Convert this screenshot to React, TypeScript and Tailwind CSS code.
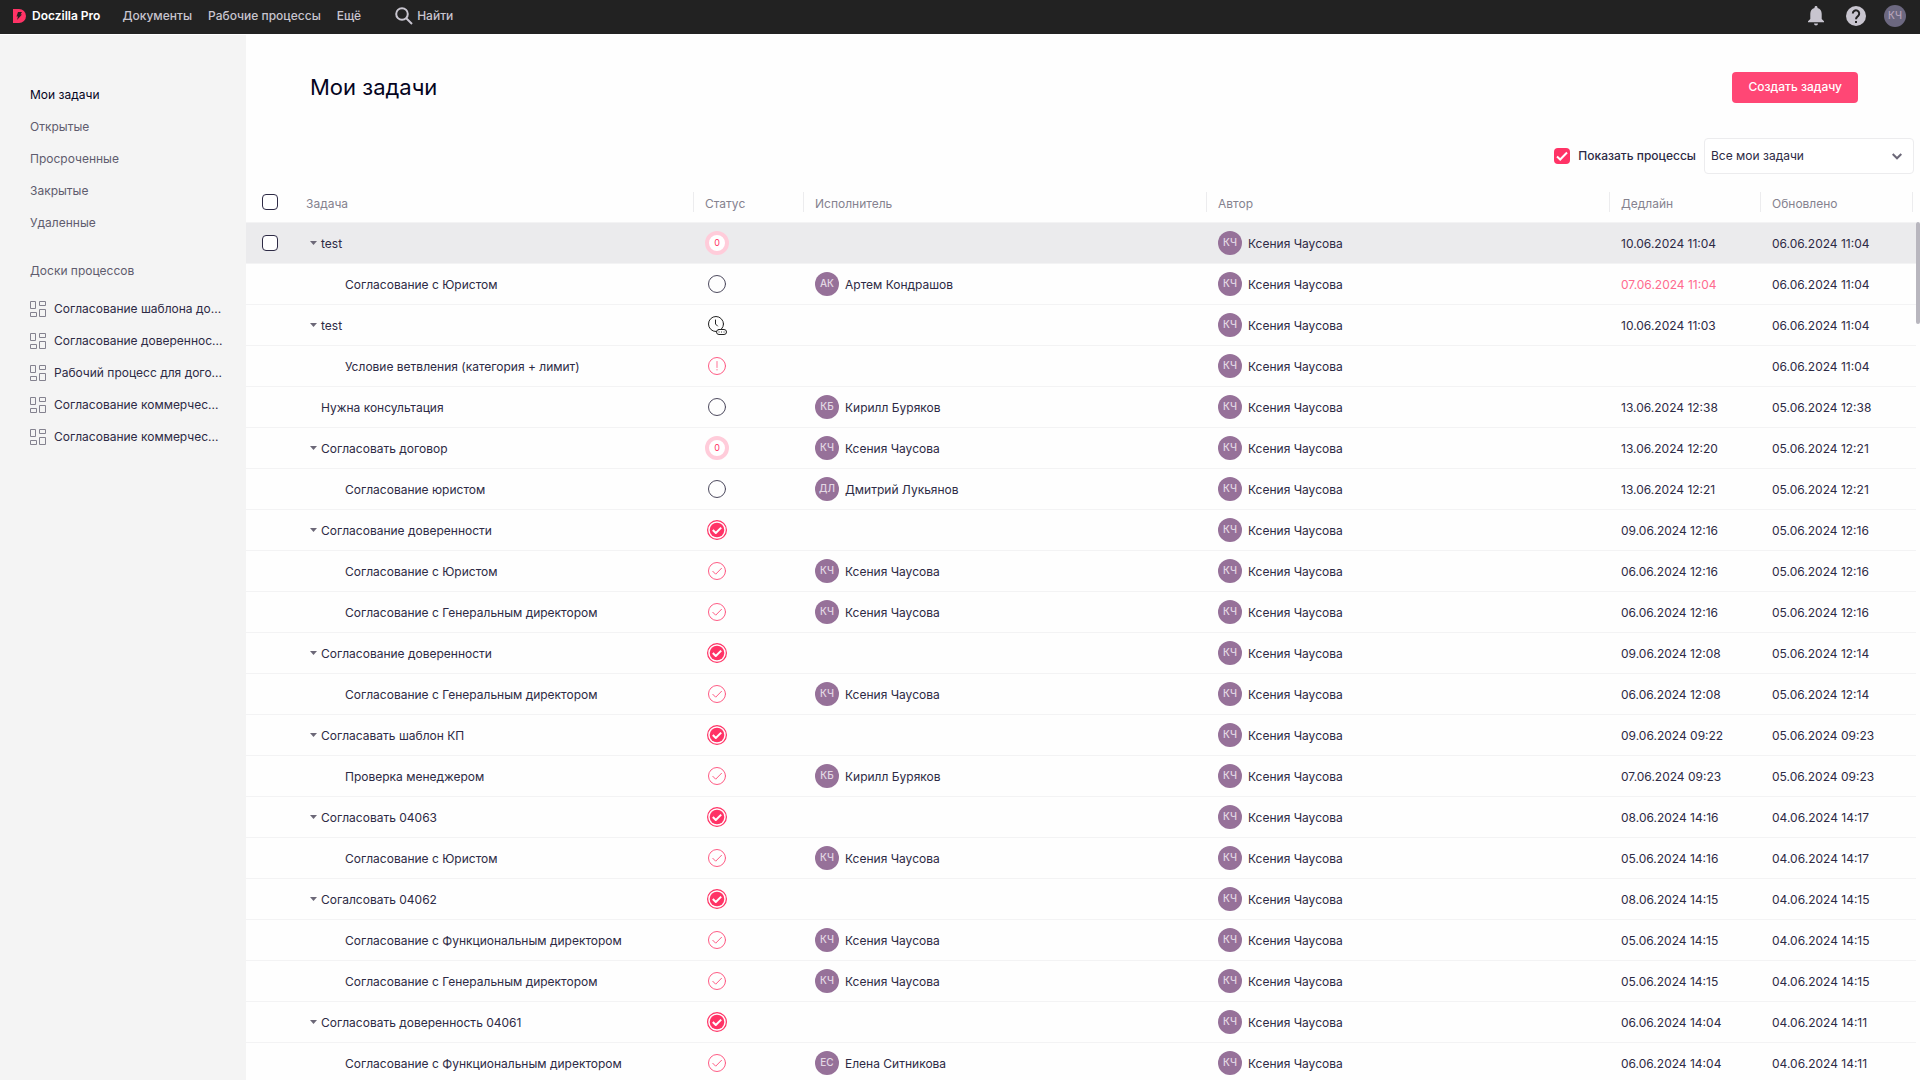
import type { ReactNode } from 'react'

type Status = 'zero' | 'open' | 'waiting' | 'alert' | 'done' | 'closed'

type Task = {
  title: string
  level: 'group' | 'single' | 'child'
  status: Status
  assignee?: string
  deadline?: string
  overdue?: boolean
  updated: string
}

const AUTHOR = 'Ксения Чаусова'

const navItems = ['Документы', 'Рабочие процессы', 'Ещё']

const filters = ['Мои задачи', 'Открытые', 'Просроченные', 'Закрытые', 'Удаленные']

const boards = [
  'Согласование шаблона до...',
  'Согласование довереннос...',
  'Рабочий процесс для дого...',
  'Согласование коммерчес...',
  'Согласование коммерчес...',
]

const tasks: Task[] = [
  { title: 'test', level: 'group', status: 'zero', deadline: '10.06.2024 11:04', updated: '06.06.2024 11:04' },
  { title: 'Согласование с Юристом', level: 'child', status: 'open', assignee: 'Артем Кондрашов', deadline: '07.06.2024 11:04', overdue: true, updated: '06.06.2024 11:04' },
  { title: 'test', level: 'group', status: 'waiting', deadline: '10.06.2024 11:03', updated: '06.06.2024 11:04' },
  { title: 'Условие ветвления (категория + лимит)', level: 'child', status: 'alert', updated: '06.06.2024 11:04' },
  { title: 'Нужна консультация', level: 'single', status: 'open', assignee: 'Кирилл Буряков', deadline: '13.06.2024 12:38', updated: '05.06.2024 12:38' },
  { title: 'Согласовать договор', level: 'group', status: 'zero', assignee: AUTHOR, deadline: '13.06.2024 12:20', updated: '05.06.2024 12:21' },
  { title: 'Согласование юристом', level: 'child', status: 'open', assignee: 'Дмитрий Лукьянов', deadline: '13.06.2024 12:21', updated: '05.06.2024 12:21' },
  { title: 'Согласование доверенности', level: 'group', status: 'closed', deadline: '09.06.2024 12:16', updated: '05.06.2024 12:16' },
  { title: 'Согласование с Юристом', level: 'child', status: 'done', assignee: AUTHOR, deadline: '06.06.2024 12:16', updated: '05.06.2024 12:16' },
  { title: 'Согласование с Генеральным директором', level: 'child', status: 'done', assignee: AUTHOR, deadline: '06.06.2024 12:16', updated: '05.06.2024 12:16' },
  { title: 'Согласование доверенности', level: 'group', status: 'closed', deadline: '09.06.2024 12:08', updated: '05.06.2024 12:14' },
  { title: 'Согласование с Генеральным директором', level: 'child', status: 'done', assignee: AUTHOR, deadline: '06.06.2024 12:08', updated: '05.06.2024 12:14' },
  { title: 'Согласавать шаблон КП', level: 'group', status: 'closed', deadline: '09.06.2024 09:22', updated: '05.06.2024 09:23' },
  { title: 'Проверка менеджером', level: 'child', status: 'done', assignee: 'Кирилл Буряков', deadline: '07.06.2024 09:23', updated: '05.06.2024 09:23' },
  { title: 'Согласовать 04063', level: 'group', status: 'closed', deadline: '08.06.2024 14:16', updated: '04.06.2024 14:17' },
  { title: 'Согласование с Юристом', level: 'child', status: 'done', assignee: AUTHOR, deadline: '05.06.2024 14:16', updated: '04.06.2024 14:17' },
  { title: 'Согалсовать 04062', level: 'group', status: 'closed', deadline: '08.06.2024 14:15', updated: '04.06.2024 14:15' },
  { title: 'Согласование с Функциональным директором', level: 'child', status: 'done', assignee: AUTHOR, deadline: '05.06.2024 14:15', updated: '04.06.2024 14:15' },
  { title: 'Согласование с Генеральным директором', level: 'child', status: 'done', assignee: AUTHOR, deadline: '05.06.2024 14:15', updated: '04.06.2024 14:15' },
  { title: 'Согласовать доверенность 04061', level: 'group', status: 'closed', deadline: '06.06.2024 14:04', updated: '04.06.2024 14:11' },
  { title: 'Согласование с Функциональным директором', level: 'child', status: 'done', assignee: 'Елена Ситникова', deadline: '06.06.2024 14:04', updated: '04.06.2024 14:11' },
]

const getInitials = (name: string) =>
  name
    .split(' ')
    .map((part) => part[0])
    .join('')

function StatusIcon({ status }: { status: Status }) {
  if (status === 'zero') {
    return (
      <span className="flex size-6 items-center justify-center rounded-full border-4 border-[#ffccda] bg-white text-[9px] leading-none text-[#ff3366]">
        0
      </span>
    )
  }

  return (
    <svg className="size-6" viewBox="0 0 24 24" fill="none" strokeLinecap="round" strokeLinejoin="round">
      {status === 'open' && <circle cx="12" cy="12" r="8.5" stroke="#4d4a5e" />}
      {status === 'alert' && (
        <>
          <circle cx="12" cy="12" r="8.5" stroke="#ff5c85" />
          <path d="M12 7.5v6M12 15.5v.5" stroke="#ff7597" />
        </>
      )}
      {status === 'done' && (
        <>
          <circle cx="12" cy="12" r="8.5" stroke="#ff5c85" />
          <path d="m7.8 12.3 2.9 2.9 5.8-5.900" stroke="#ff5c85" />
        </>
      )}
      {status === 'closed' && (
        <>
          <circle cx="12" cy="12" r="9.4" stroke="#ff3366" strokeWidth="1.2" />
          <circle cx="12" cy="12" r="7.3" fill="#ff3366" />
          <path d="m7.8 12 3 3 5.400-5.400" stroke="#fff" strokeWidth="2" strokeLinecap="butt" />
        </>
      )}
      {status === 'waiting' && (
        <>
          <circle cx="11" cy="11" r="7.5" stroke="#222" />
          <path d="M10.5 7v4l2 2" stroke="#222" />
          <rect x="11.5" y="16.5" width="10" height="5" rx="2.5" fill="#fff" stroke="#222" />
          <path d="M14 19h.1M16.5 19h.1M19 19h.1" stroke="#222" />
        </>
      )}
    </svg>
  )
}

function BoardIcon() {
  return (
    <svg className="size-4 shrink-0" viewBox="0 0 16 16" fill="none" stroke="#84828f">
      <path d="M.5.5h5v7h-5zM9.500.5h6v4h-6zM.5 11.500h6v4h-6zM9.500 8.500h6v7h-6z" />
    </svg>
  )
}

function Logo() {
  return (
    <svg className="h-3.5 w-[13px]" viewBox="0 0 13 14">
      <path d="M0 0h6a7 7 0 0 1 0 14H0z" fill="#ff3366" />
      <path d="M5 3h4L7.500 5.500H9L4 11l1-3.500H3.500z" fill="#222" />
    </svg>
  )
}

function Person({ name }: { name: string }) {
  return (
    <div className="flex items-center gap-1.5">
      <span className="flex size-6 items-center justify-center rounded-full bg-[#967199] pb-0.5 text-[10px] font-medium text-[#e3d8e4]">
        {getInitials(name)}
      </span>
      <span className="pt-0.5">{name}</span>
    </div>
  )
}

function Checkbox({ label }: { label: string }) {
  return (
    <input
      type="checkbox"
      aria-label={label}
      className="block size-4 appearance-none rounded border border-[#2d2a45] bg-white"
    />
  )
}

function HeadCell({ children }: { children?: ReactNode }) {
  return (
    <th className="p-0 text-left font-normal">
      <div className="flex h-5 items-center border-l border-[#ececee] pt-1 pl-[11px]">{children}</div>
    </th>
  )
}

function Header() {
  return (
    <header className="flex h-[35px] shrink-0 items-center border-b border-white bg-[#222] bg-clip-padding pr-3.5 pb-0.5 pl-[13px] font-medium text-[#c8c5cf]">
      <a href="#" className="flex items-center gap-1.5 font-semibold text-white">
        <Logo />
        Doczilla Pro
      </a>
      <nav className="ml-[22px] flex gap-4">
        {navItems.map((item) => (
          <a key={item} href="#">
            {item}
          </a>
        ))}
      </nav>
      <button type="button" className="ml-[34px] flex items-center gap-1">
        <svg className="size-[18px]" viewBox="0 0 18 18" fill="none" stroke="currentColor" strokeWidth="2">
          <circle cx="7" cy="7" r="5.800" />
          <path d="m11 11 6 6" />
        </svg>
        Найти
      </button>
      <div className="ml-auto flex items-center">
        <button type="button" aria-label="Уведомления">
          <svg className="h-5 w-4" viewBox="0 0 16 20" fill="currentColor">
            <path d="M8 0c-1 0-1.500.7-1.500 1.500v.6C3.800 2.700 2.300 5 2.300 7.800V13L0 15.300v1h16v-1L13.700 13V7.800c0-2.800-1.500-5.100-4.200-5.700v-.6C9.500.7 9 0 8 0zM6 17.500a2 2 0 0 0 4 0z" />
          </svg>
        </button>
        <button type="button" aria-label="Помощь" className="ml-[22px]">
          <svg className="size-5" viewBox="0 0 20 20">
            <circle cx="10" cy="10" r="10" fill="#c8c5cf" />
            <path d="M6.800 7.500a3.200 3.200 0 1 1 5.300 2.400C10.800 11 10 11.500 10 13.200" fill="none" stroke="#222" strokeWidth="2" />
            <path d="M9 15h2v2H9z" fill="#222" />
          </svg>
        </button>
        <button type="button" className="ml-[18px] size-[22px] rounded-full bg-[#6c6880] pb-0.5 text-[10px] text-[#b5a3b8]">
          КЧ
        </button>
      </div>
    </header>
  )
}

function Sidebar() {
  return (
    <aside className="w-[246px] shrink-0 bg-[#f4f4f4] pt-11 pr-6 pl-[30px] text-[#5f5c6e]">
      <nav>
        {filters.map((item, index) => (
          <a key={item} href="#" className={index === 0 ? 'flex h-8 items-center text-[#05051e]' : 'flex h-8 items-center'}>
            {item}
          </a>
        ))}
      </nav>
      <h2 className="mt-4 flex h-8 items-center">Доски процессов</h2>
      <nav className="mt-1.5 text-[#2d2a45]">
        {boards.map((item, index) => (
          <a key={index} href="#" className="flex h-8 items-center gap-2">
            <BoardIcon />
            <span className="whitespace-nowrap">{item}</span>
          </a>
        ))}
      </nav>
    </aside>
  )
}

function TaskRow({ task, active }: { task: Task; active: boolean }) {
  return (
    <tr className={active ? 'h-[41px] border-b border-[#f3f3f4] bg-[#ebebed]' : 'h-[41px] border-b border-[#f3f3f4]'}>
      <td className="p-0 pl-4">{active && <Checkbox label="Выбрать задачу" />}</td>
      <td className="p-0 pt-0.5">
        <div className={task.level === 'child' ? 'flex items-center pl-[51px]' : 'flex items-center pl-4'}>
          {task.level !== 'child' && (
            <span className="w-[11px] pb-0.5">
              {task.level === 'group' && (
                <svg className="h-1 w-[7px]" viewBox="0 0 7 4" fill="#6c6878">
                  <path d="M0 0h7L3.500 4z" />
                </svg>
              )}
            </span>
          )}
          {task.title}
        </div>
      </td>
      <td className="p-0 pl-3">
        <StatusIcon status={task.status} />
      </td>
      <td className="p-0 pl-3">{task.assignee && <Person name={task.assignee} />}</td>
      <td className="p-0 pl-3">
        <Person name={AUTHOR} />
      </td>
      <td className={task.overdue ? 'p-0 pt-0.5 pl-3 text-[#ff6b8f]' : 'p-0 pt-0.5 pl-3'}>{task.deadline}</td>
      <td className="p-0 pt-0.5 pl-3">{task.updated}</td>
      <td className="p-0" />
    </tr>
  )
}

function TaskTable() {
  return (
    <div className="flex">
      <div className="min-w-0 flex-1">
        <table className="w-full table-fixed border-collapse">
          <colgroup>
            <col className="w-12" />
            <col className="w-[399px]" />
            <col className="w-[110px]" />
            <col />
            <col />
            <col className="w-[151px]" />
            <col className="w-[152px]" />
            <col className="w-1" />
          </colgroup>
          <thead>
            <tr className="h-10 border-b border-[#f3f3f4] text-[#85828f]">
              <th className="p-0 pl-4">
                <Checkbox label="Выбрать все" />
              </th>
              <th className="p-0 pt-1 pl-3 text-left font-normal">Задача</th>
              <HeadCell>Статус</HeadCell>
              <HeadCell>Исполнитель</HeadCell>
              <HeadCell>Автор</HeadCell>
              <HeadCell>Дедлайн</HeadCell>
              <HeadCell>Обновлено</HeadCell>
              <HeadCell />
            </tr>
          </thead>
          <tbody>
            {tasks.map((task, index) => (
              <TaskRow key={index} task={task} active={index === 0} />
            ))}
          </tbody>
        </table>
      </div>
      {/* scrollbar thumb */}
      <div className="mt-10 h-[102px] w-1 rounded-sm bg-[#b8b6be]" />
    </div>
  )
}

export default function App() {
  return (
    <div className="flex h-screen flex-col overflow-hidden bg-[#fefefe] font-['Inter',sans-serif] text-[12px] leading-4 text-[#2d2a45]">
      <Header />
      <div className="flex min-h-0 flex-1">
        <Sidebar />
        <main className="min-w-0 flex-1">
          <div className="flex items-center justify-between pt-9 pr-[62px] pl-16">
            <h1 className="text-[22px] leading-8 text-[#05051e]">Мои задачи</h1>
            <button type="button" className="h-[31px] rounded bg-[#ff4775] px-4 font-medium text-white">
              Создать задачу
            </button>
          </div>
          <div className="mt-[35px] flex items-center justify-end gap-2 pr-1.5">
            <label className="flex items-center gap-2 font-medium text-[#2d2a45]">
              <span className="relative flex">
                <input type="checkbox" defaultChecked className="size-4 appearance-none rounded bg-[#ff3366]" />
                <svg className="pointer-events-none absolute inset-0 size-4" viewBox="0 0 16 16" fill="none" stroke="#fff" strokeWidth="2">
                  <path d="m3 8.500 3.200 3L13 4.500" />
                </svg>
              </span>
              Показать процессы
            </label>
            <div className="relative">
              <select aria-label="Фильтр задач" className="h-9 w-[210px] appearance-none rounded border border-[#ececee] bg-white pl-1.5">
                <option>Все мои задачи</option>
              </select>
              <svg className="pointer-events-none absolute top-[15px] right-3 h-[7px] w-2.5" viewBox="0 0 10 7" fill="none" stroke="#6c6878" strokeWidth="2">
                <path d="m.7 1 4.300 4.300L9.300 1" />
              </svg>
            </div>
          </div>
          <div className="mt-2">
            <TaskTable />
          </div>
        </main>
      </div>
    </div>
  )
}
